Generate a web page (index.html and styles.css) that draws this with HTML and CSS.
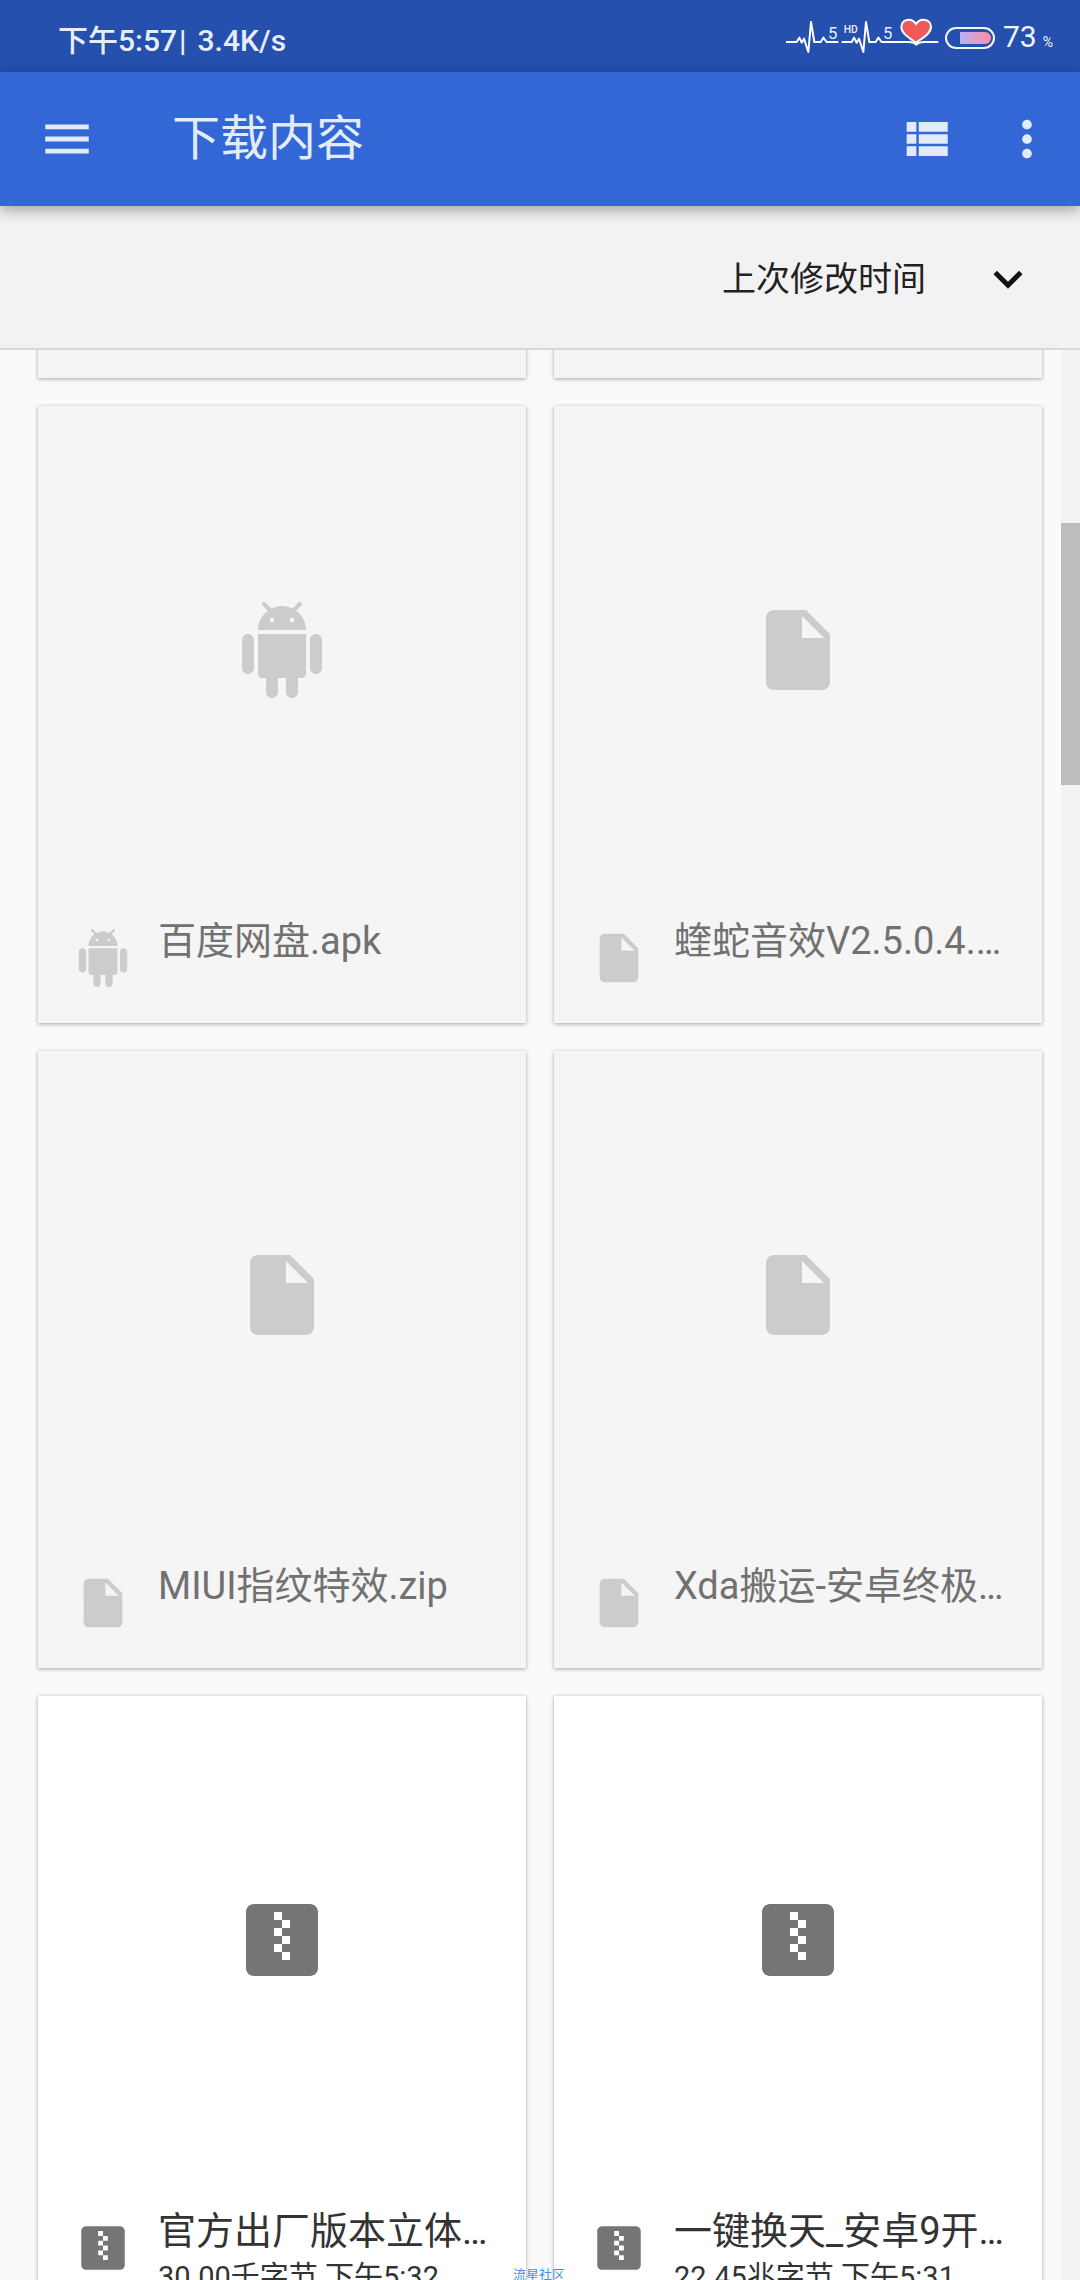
FILE: index.html
```html
<!DOCTYPE html>
<html lang="zh-CN">
<head>
<meta charset="utf-8">
<title>下载内容</title>
<link rel="stylesheet" href="styles.css">
</head>
<body>
<svg class="defs" aria-hidden="true">
  <symbol id="i-android" viewBox="0 0 24 24"><path d="M6 18c0 .55.45 1 1 1h1v3.5c0 .83.67 1.5 1.5 1.5s1.5-.67 1.5-1.5V19h2v3.5c0 .83.67 1.5 1.5 1.5s1.5-.67 1.5-1.5V19h1c.55 0 1-.45 1-1V8H6v10zM3.5 8C2.67 8 2 8.67 2 9.5v7c0 .83.67 1.5 1.5 1.5S5 17.33 5 16.5v-7C5 8.67 4.33 8 3.5 8zm17 0c-.83 0-1.5.67-1.5 1.5v7c0 .83.67 1.5 1.5 1.5s1.5-.67 1.5-1.5v-7c0-.83-.67-1.5-1.5-1.5zm-4.97-5.84l1.3-1.3c.2-.2.2-.51 0-.71-.2-.2-.51-.2-.71 0l-1.48 1.48C13.85 1.23 12.95 1 12 1c-.96 0-1.86.23-2.66.63L7.85.15c-.2-.2-.51-.2-.71 0-.2.2-.2.51 0 .71l1.31 1.31C6.97 3.26 6 5.01 6 7h12c0-1.99-.97-3.75-2.47-4.84zM10 5H9V4h1v1zm5 0h-1V4h1v1z"/></symbol>
  <symbol id="i-doc" viewBox="0 0 24 24"><path d="M6 2c-1.1 0-1.99.9-1.99 2L4 20c0 1.1.89 2 1.99 2H18c1.1 0 2-.9 2-2V8l-6-6H6zm7 7V3.5L18.5 9H13z"/></symbol>
  <symbol id="i-zip" viewBox="0 0 24 24"><path d="M19 3H5c-1.1 0-2 .9-2 2v14c0 1.1.9 2 2 2h14c1.1 0 2-.9 2-2V5c0-1.1-.9-2-2-2zM10 5h2v2h-2V5zm2 2h2v2h-2V7zm-2 2h2v2h-2V9zm2 2h2v2h-2v-2zm-2 2h2v2h-2v-2zm2 2h2v2h-2v-2z" fill-rule="evenodd"/></symbol>
</svg>

<div class="phone">
  <header class="statusbar">
    <span class="clock">下午5:57<span class="sep">|</span>3.4K/s</span>
    <div class="status-right">
      <svg class="ecg" viewBox="0 20 480 120" aria-hidden="true">
        <path class="ecg-line" d="M18 98H50L58 85 65 100 72 88 85 128 93 38 103 98H122L130 85 140 98H175M185 98H215L222 85 230 100 237 88 250 128 258 38 268 98H287L295 85 305 98H385C395 98 403 100 408 106C416 99 424 98 434 98H475"/>
        <path class="heart" d="M408 100C385 84 364 72 364 52C364 38 375 31 386 31C396 31 404 37 408 44C412 37 420 31 430 31C442 31 453 38 453 52C453 72 431 84 408 100Z"/>
        <text class="ecg-num" x="144" y="88">5</text>
        <text class="ecg-hd" x="191" y="70">HD</text>
        <text class="ecg-num" x="309" y="88">5</text>
      </svg>
      <div class="battery"><div class="battery-fill"></div></div>
      <span class="pct">73<small>%</small></span>
    </div>
  </header>

  <header class="appbar">
    <svg class="ic" viewBox="0 0 24 24" aria-hidden="true"><path d="M3 18h18v-2H3v2zm0-5h18v-2H3v2zm0-7v2h18V6H3z"/></svg>
    <h1 class="title">下载内容</h1>
    <svg class="ic ic-list" viewBox="0 0 24 24" aria-hidden="true"><path d="M4 14h4v-4H4v4zm0 5h4v-4H4v4zM4 9h4V5H4v4zm5 5h12v-4H9v4zm0 5h12v-4H9v4zM9 5v4h12V5H9z"/></svg>
    <svg class="ic ic-more" viewBox="0 0 24 24" aria-hidden="true"><path d="M12 8c1.100 0 2-.9 2-2s-.9-2-2-2-2 .9-2 2 .9 2 2 2zm0 2c-1.100 0-2 .9-2 2s.9 2 2 2 2-.9 2-2-.9-2-2-2zm0 6c-1.100 0-2 .9-2 2s.9 2 2 2 2-.9 2-2-.9-2-2-2z"/></svg>
  </header>

  <div class="sortbar">
    <span class="sort-label">上次修改时间</span>
    <svg class="ic ic-chevron" viewBox="0 0 24 24" aria-hidden="true"><path d="M16.590 8.590L12 13.170 7.410 8.590 6 10l6 6 6-6z"/></svg>
  </div>

  <div class="content">
    <main class="listing">
      <div class="grid">
        <article class="card off"></article>
        <article class="card off"></article>

        <article class="card off">
          <div class="thumb"><svg class="big"><use href="#i-android"/></svg></div>
          <div class="foot">
            <svg class="small"><use href="#i-android"/></svg>
            <div class="meta"><div class="name">百度网盘.apk</div></div>
          </div>
        </article>
        <article class="card off">
          <div class="thumb"><svg class="big"><use href="#i-doc"/></svg></div>
          <div class="foot">
            <svg class="small"><use href="#i-doc"/></svg>
            <div class="meta"><div class="name">蝰蛇音效V2.5.0.4.…</div></div>
          </div>
        </article>

        <article class="card off">
          <div class="thumb"><svg class="big"><use href="#i-doc"/></svg></div>
          <div class="foot">
            <svg class="small"><use href="#i-doc"/></svg>
            <div class="meta"><div class="name">MIUI指纹特效.zip</div></div>
          </div>
        </article>
        <article class="card off">
          <div class="thumb"><svg class="big"><use href="#i-doc"/></svg></div>
          <div class="foot">
            <svg class="small"><use href="#i-doc"/></svg>
            <div class="meta"><div class="name">Xda搬运-安卓终极…</div></div>
          </div>
        </article>

        <article class="card">
          <div class="thumb"><svg class="big"><use href="#i-zip"/></svg></div>
          <div class="foot">
            <svg class="small"><use href="#i-zip"/></svg>
            <div class="meta">
              <div class="name">官方出厂版本立体…</div>
              <div class="sub">30.00千字节 下午5:32</div>
            </div>
          </div>
        </article>
        <article class="card">
          <div class="thumb"><svg class="big"><use href="#i-zip"/></svg></div>
          <div class="foot">
            <svg class="small"><use href="#i-zip"/></svg>
            <div class="meta">
              <div class="name">一键换天_安卓9开…</div>
              <div class="sub">22.45兆字节 下午5:31</div>
            </div>
          </div>
        </article>
      </div>
    </main>
    <div class="scrollbar"><div class="thumbbar"></div></div>
    <span class="watermark">流星社区</span>
  </div>
</div>
</body>
</html>
```

FILE: styles.css
```css
* { box-sizing: border-box; }

html, body {
  margin: 0;
  padding: 0;
  height: 2280px;
  overflow: hidden;
}

body {
  font-family: Roboto, "Noto Sans CJK SC", sans-serif;
  background: #fafafa;
}

.defs { display: none; }

.phone {
  display: flex;
  flex-direction: column;
  width: 1080px;
  height: 2280px;
}

/* status bar */
.statusbar {
  flex: none;
  height: 72px;
  display: flex;
  align-items: center;
  justify-content: space-between;
  padding: 0 27px 0 58px;
  background: #2650ae;
  color: #e6eefc;
}

.clock {
  font-size: 30px;
  font-weight: 500;
  white-space: nowrap;
  margin-top: 4px;
}

.sep {
  margin: 0 11px 0 2px;
}

.status-right {
  display: flex;
  align-items: center;
}

.ecg {
  width: 160px;
  height: 40px;
}

.ecg-line {
  fill: none;
  stroke: #fff;
  stroke-width: 6;
  stroke-linejoin: round;
}

.heart {
  fill: #ef5b5b;
  stroke: #fff;
  stroke-width: 6;
}

.ecg-num {
  font-family: Roboto, sans-serif;
  font-size: 50px;
  fill: #e6eefc;
}

.ecg-hd {
  font-family: Roboto, sans-serif;
  font-size: 31px;
  font-weight: 500;
  fill: #e6eefc;
}

.battery {
  width: 50px;
  height: 22px;
  margin: 4px 0 0 5px;
  padding: 3px 2px 3px 13px;
  border: 2px solid #f2f6ff;
  border-radius: 11px;
}

.battery-fill {
  height: 100%;
  border-radius: 0 7px 7px 0;
  background: linear-gradient(90deg, #b8b0f5, #ff8fa0);
}

.pct {
  margin: 6px 0 0 8px;
  font-size: 30px;
  line-height: 34px;
  color: #f2f6ff;
}

.pct small {
  margin-left: 6px;
  font-size: 14px;
}

/* app bar */
.appbar {
  position: relative;
  z-index: 2;
  flex: none;
  height: 134px;
  display: flex;
  align-items: center;
  padding: 0 24px 0 38px;
  background: #3367d6;
  color: #e3ecfb;
  box-shadow: 0 4px 14px rgba(0, 0, 0, .35);
}

.ic {
  flex: none;
  width: 58px;
  height: 58px;
  fill: #e1ebfc;
}

.title {
  flex: 1;
  margin: 0 0 0 76px;
  font-size: 48px;
  font-weight: 400;
  line-height: 64px;
}

.ic-more { margin-left: 43px; }

/* sort bar */
.sortbar {
  position: relative;
  z-index: 1;
  flex: none;
  height: 144px;
  display: flex;
  align-items: center;
  justify-content: flex-end;
  padding: 3px 43px 0 0;
  background: #f2f2f2;
  border-bottom: 2px solid #d9d9d9;
}

.sort-label {
  font-size: 34px;
  line-height: 44px;
  color: #212121;
}

.ic-chevron {
  margin-left: 53px;
  fill: #111;
}

/* listing */
.content {
  position: relative;
  flex: 1;
  min-height: 0;
  display: flex;
  overflow: hidden;
}

.listing {
  flex: 1;
  min-width: 0;
  overflow: hidden;
}

.grid {
  display: grid;
  grid-template-columns: 488px 488px;
  grid-auto-rows: 617px;
  gap: 28px;
  margin-top: -589px;
  padding-left: 38px;
}

.card {
  background: #fff;
  box-shadow: 0 1px 4px rgba(0, 0, 0, .35);
  color: #333;
}

.card.off {
  background: #f5f5f5;
  color: #717171;
}

.thumb {
  height: 510px;
  padding-top: 196px;
  display: flex;
  justify-content: center;
  align-items: flex-start;
}

.big {
  width: 96px;
  height: 96px;
  fill: #757575;
}

.foot {
  display: flex;
  align-items: flex-start;
  padding: 0 36px;
}

.small {
  flex: none;
  width: 58px;
  height: 58px;
  margin-top: 13px;
  fill: #757575;
}

.off .big, .off .small { fill: #ccc; }

.meta {
  min-width: 0;
  margin: 1px 0 0 26px;
}

.name {
  font-size: 38px;
  line-height: 48px;
  white-space: nowrap;
}

.sub {
  font-size: 29px;
  line-height: 44px;
  white-space: nowrap;
}

.scrollbar {
  flex: none;
  width: 19px;
  background: #f2f2f2;
}

.thumbbar {
  height: 262px;
  margin-top: 173px;
  background: #bdbdbd;
}

.watermark {
  position: absolute;
  left: 513px;
  bottom: -2px;
  font-size: 13px;
  line-height: 15px;
  color: #4a90e2;
}
```
